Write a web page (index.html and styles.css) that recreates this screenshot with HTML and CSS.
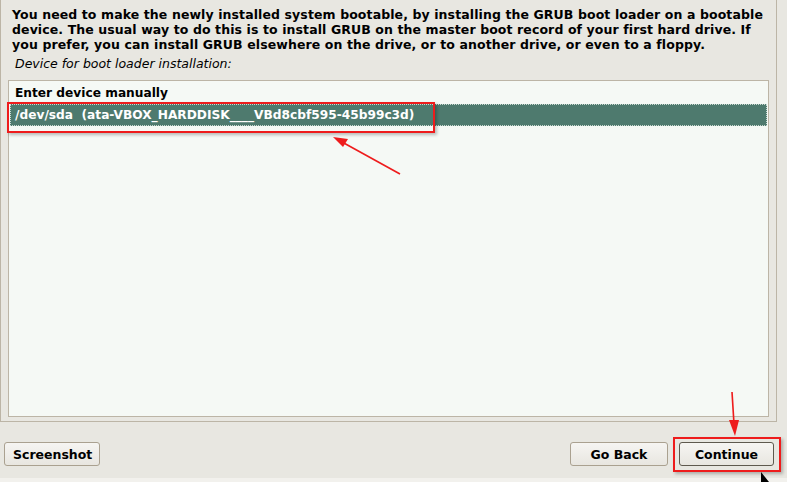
FILE: index.html
```html
<!DOCTYPE html>
<html lang="en">
<head>
  <meta charset="UTF-8" />
  <title>Install the GRUB boot loader</title>
  <link rel="stylesheet" href="styles.css">
</head>
<body>
  <div class="frame">
    <p class="intro">You need to make the newly installed system bootable, by installing the GRUB boot loader on a bootable device. The usual way to do this is to install GRUB on the master boot record of your first hard drive. If you prefer, you can install GRUB elsewhere on the drive, or to another drive, or even to a floppy.</p>
    <div class="question">Device for boot loader installation:</div>
    <ul class="choices">
      <li>Enter device manually</li>
      <li class="selected">/dev/sda&nbsp; (ata-VBOX_HARDDISK____VBd8cbf595-45b99c3d)</li>
    </ul>
  </div>

  <div class="buttons">
    <button>Screenshot</button>
    <div class="right">
      <button>Go Back</button>
      <button class="focus">Continue</button>
    </div>
  </div>
  <div class="strip"></div>

  <!-- annotations drawn over the screenshot -->
  <div class="mark mark-item"></div>
  <div class="mark mark-btn"></div>
  <svg class="arrows" width="787" height="482" viewBox="0 0 787 482">
    <g stroke="#ee1c1c" stroke-width="1.6" fill="none">
      <line x1="400" y1="174" x2="342" y2="142" />
      <line x1="732" y1="392" x2="734" y2="424" />
    </g>
    <g fill="#ee1c1c">
      <polygon points="333,137 348,139 343,147" />
      <polygon points="735,436 729,420 739,420" />
    </g>
    <polygon points="761,472 761,482 769,482" fill="#000" />
  </svg>
</body>
</html>
```

FILE: styles.css
```css
* {
  margin: 0;
  padding: 0;
  box-sizing: border-box;
}

body {
  width: 787px;
  height: 482px;
  overflow: hidden;
  background: #e8e7e1;
  font-family: "DejaVu Sans", sans-serif;
  font-size: 12.5px;
  color: #000;
  position: relative;
}

.frame {
  width: 777px;
  height: 422px;
  border: 1px solid #bcb5a6;
  border-top: none;
  padding: 7px 7px 0 7px;
  display: flex;
  flex-direction: column;
}

.intro {
  font-weight: bold;
  line-height: 15px;
  padding-left: 4px;
  letter-spacing: 0.1px;
}

.question {
  font-style: italic;
  margin-top: 4px;
  padding-left: 7px;
  line-height: 15px;
}

.choices {
  list-style: none;
  margin-top: 9px;
  flex: 1;
  background: #f5f9f5;
  border: 1px solid #bcb5a6;
  margin-bottom: 4px;
  padding: 1px 1px 0 1px;
  font-size: 12.2px;
}

.choices li {
  font-weight: bold;
  line-height: 20px;
  padding-left: 4px;
  border: 1px dotted transparent;
}

.choices li.selected {
  background: #4e7a6e;
  color: #fff;
  border-color: #c8d8d0;
}

.buttons {
  display: flex;
  justify-content: space-between;
  padding: 20px 13px 0 4px;
}

.right {
  display: flex;
  gap: 11px;
}

button {
  font-family: "DejaVu Sans", sans-serif;
  font-size: 12.5px;
  font-weight: bold;
  height: 24px;
  padding: 0 8px;
  background: linear-gradient(#f6f5f2, #e8e6e0);
  border: 1px solid #aaa190;
  border-radius: 3px;
  color: #000;
}

button:first-child {
  width: 96px;
}

.right button {
  width: 98px;
}

button.focus {
  width: 95px;
  border-color: #5e594e;
}

.strip {
  position: absolute;
  left: 0;
  bottom: 0;
  width: 787px;
  height: 4px;
  background: #f2f1ed;
}

.mark {
  position: absolute;
  border: 2.5px solid #ee1c1c;
  box-shadow: 2px 2px 3px rgba(0, 0, 0, 0.25);
}

.mark-item {
  left: 7px;
  top: 102px;
  width: 428px;
  height: 31px;
}

.mark-btn {
  left: 673px;
  top: 437px;
  width: 108px;
  height: 35px;
}

.arrows {
  position: absolute;
  left: 0;
  top: 0;
}
```
